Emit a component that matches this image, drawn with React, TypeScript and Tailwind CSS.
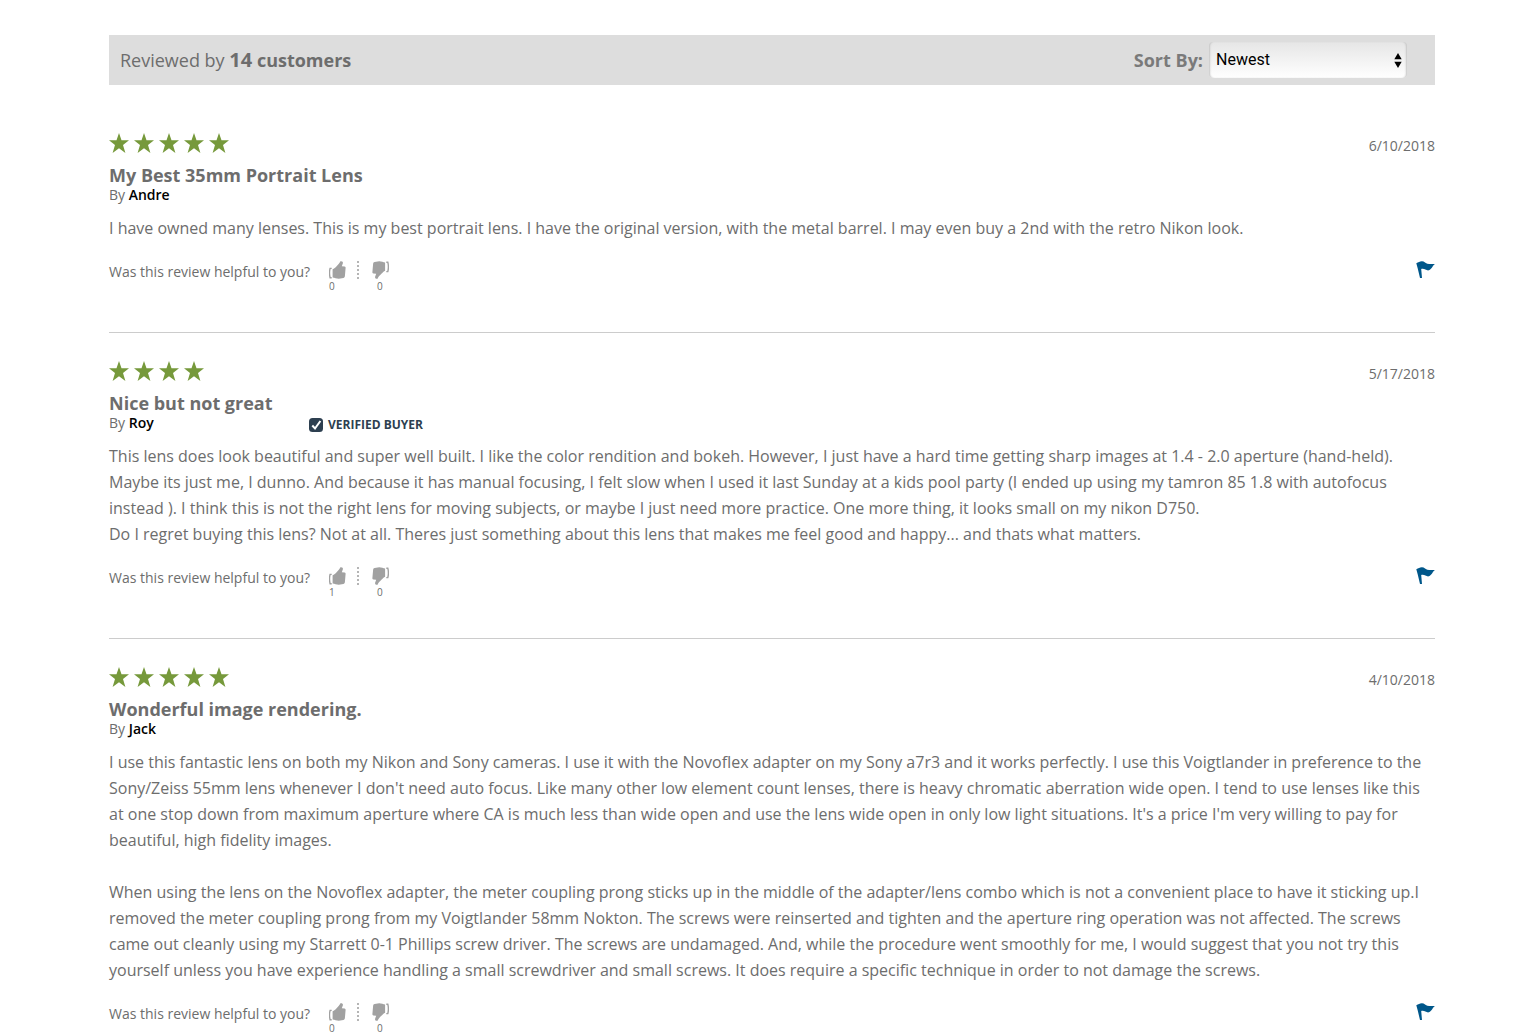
import React from 'react';

interface Review {
  id: string;
  rating: number;
  date: string;
  title: string;
  author: string;
  verified?: boolean;
  body: string;
  up: number;
  down: number;
}

const reviews: Review[] = [
  {
    id: 'andre',
    rating: 5,
    date: '6/10/2018',
    title: 'My Best 35mm Portrait Lens',
    author: 'Andre',
    body: 'I have owned many lenses. This is my best portrait lens. I have the original version, with the metal barrel. I may even buy a 2nd with the retro Nikon look.',
    up: 0,
    down: 0,
  },
  {
    id: 'roy',
    rating: 4,
    date: '5/17/2018',
    title: 'Nice but not great',
    author: 'Roy',
    verified: true,
    body: 'This lens does look beautiful and super well built. I like the color rendition and bokeh. However, I just have a hard time getting sharp images at 1.4 - 2.0 aperture (hand-held). Maybe its just me, I dunno. And because it has manual focusing, I felt slow when I used it last Sunday at a kids pool party (I ended up using my tamron 85 1.8 with autofocus instead ). I think this is not the right lens for moving subjects, or maybe I just need more practice. One more thing, it looks small on my nikon D750.\nDo I regret buying this lens? Not at all. Theres just something about this lens that makes me feel good and happy... and thats what matters.',
    up: 1,
    down: 0,
  },
  {
    id: 'jack',
    rating: 5,
    date: '4/10/2018',
    title: 'Wonderful image rendering.',
    author: 'Jack',
    body: "I use this fantastic lens on both my Nikon and Sony cameras. I use it with the Novoflex adapter on my Sony a7r3 and it works perfectly. I use this Voigtlander in preference to the Sony/Zeiss 55mm lens whenever I don't need auto focus. Like many other low element count lenses, there is heavy chromatic aberration wide open. I tend to use lenses like this at one stop down from maximum aperture where CA is much less than wide open and use the lens wide open in only low light situations. It's a price I'm very willing to pay for beautiful, high fidelity images.\n\nWhen using the lens on the Novoflex adapter, the meter coupling prong sticks up in the middle of the adapter/lens combo which is not a convenient place to have it sticking up.I removed the meter coupling prong from my Voigtlander 58mm Nokton. The screws were reinserted and tighten and the aperture ring operation was not affected. The screws came out cleanly using my Starrett 0-1 Phillips screw driver. The screws are undamaged. And, while the procedure went smoothly for me, I would suggest that you not try this yourself unless you have experience handling a small screwdriver and small screws. It does require a specific technique in order to not damage the screws.",
    up: 0,
    down: 0,
  },
];

function Star() {
  return (
    <svg className="h-5 w-5" viewBox="0 0 20 20" fill="#76993b" aria-hidden="true">
      <path d="M10 0 12.5 7.2H20L14 11.9 16.4 20 10 15.2 3.6 20 6 11.9 0 7.2H7.5Z" />
    </svg>
  );
}

function ThumbUp() {
  return (
    <svg className="h-[18px] w-[17px]" viewBox="0 0 17 18" fill="#a1a1a1" aria-hidden="true">
      <path d="M11.4 0.3C13.2 0 14.2 0.9 13.9 2.3L12.8 5.3 15.6 5.6C16.4 5.8 16.7 6.3 16.6 7L15.9 15C15.8 16.2 15.3 16.8 14.4 17L9.8 17.8C7.4 17.8 5.7 16.9 3.6 16.6V8.3C5.2 7.8 6.4 6.4 7.6 5.2 9.2 3.7 10.7 2.2 11.4 0.3Z" />
      <path d="M2.7 7.4H1.1Q-0.1 12 1.1 16.8H2.7" fill="none" stroke="#a1a1a1" strokeWidth="1.4" />
    </svg>
  );
}

function ThumbDown() {
  return (
    <svg className="h-[18px] w-[17px]" viewBox="0 0 17 18" fill="#a1a1a1" aria-hidden="true">
      <path d="M5.6 17.7C3.8 18 2.8 17.1 3.1 15.7L4.2 12.7 1.4 12.4C0.6 12.2 0.3 11.7 0.4 11L1.1 3C1.2 1.8 1.7 1.2 2.6 1L7.2 0.2C9.6 0.2 11.3 1.1 13.1 1.4V9.7C11.8 10.2 10.6 11.6 9.4 12.8 7.8 14.3 6.3 15.8 5.6 17.7Z" />
      <path d="M14.3 1.2H15.8Q17 6 15.8 10.6H14.3" fill="none" stroke="#a1a1a1" strokeWidth="1.4" />
    </svg>
  );
}

function Flag() {
  return (
    <svg className="h-[18px] w-[19px]" viewBox="0 0 19 18" fill="#00578a" aria-hidden="true">
      <path d="M0.3 2.2C2.5 1.6 3.7 0.2 6 0.3 8.4 0.4 9 2.3 11.3 2.7 13.7 3.1 16.2 2.8 18.9 3.1 16.4 4.8 15.8 8.4 12.9 9.3 10.3 10 8.2 7 5.2 8.1L6 17.1H4L1.8 7.8Z" />
    </svg>
  );
}

function VerifiedBadge() {
  return (
    <span className="flex items-center gap-1 text-xs font-bold text-[#2d3f50]">
      <svg className="h-[15px] w-[15px]" viewBox="0 0 15 15" aria-hidden="true">
        <rect x="0" y="0" width="14" height="14" rx="3.5" fill="#2d3f50" />
        <path d="M3.3 7.5 6 10.5 11.4 3" fill="none" stroke="#fff" strokeWidth="2" />
      </svg>
      VERIFIED BUYER
    </span>
  );
}

function ReviewItem({ review }: { review: Review }) {
  return (
    <article className="border-b border-[#ccc] pt-7 pb-[39px] last:border-b-0 last:pb-0">
      <div className="flex justify-between">
        <div className="flex h-8 gap-[5px]" role="img" aria-label={`${review.rating} out of 5 stars`}>
          {Array.from({ length: review.rating }, (_, i) => (
            <Star key={i} />
          ))}
        </div>
        <time className="pt-[3px] text-sm leading-5">{review.date}</time>
      </div>
      <h2 className="text-lg leading-5 font-bold">{review.title}</h2>
      <div className="flex h-5 text-sm leading-5">
        <p className="w-[200px] font-medium">
          By <span className="font-semibold text-black">{review.author}</span>
        </p>
        {review.verified && (
          <div className="pt-1">
            <VerifiedBadge />
          </div>
        )}
      </div>
      <p className="mt-2.5 text-base leading-[26px] whitespace-pre-line">{review.body}</p>
      <div className="mt-5 flex justify-between">
        <div className="flex h-8">
          <p className="w-[220px] text-sm leading-[22px]">Was this review helpful to you?</p>
          <button type="button" aria-label="Helpful" className="flex flex-col items-start text-[10px] leading-[14px]">
            <ThumbUp />
            {review.up}
          </button>
          <span className="mx-[11px] h-[18px] border-l-2 border-dotted border-[#b5b5b5]" />
          <button type="button" aria-label="Not helpful" className="ml-0.5 flex flex-col items-start text-[10px] leading-[14px]">
            <ThumbDown />
            <span className="pl-[5px]">{review.down}</span>
          </button>
        </div>
        <button type="button" aria-label="Report this review" className="self-start">
          <Flag />
        </button>
      </div>
    </article>
  );
}

export default function App() {
  return (
    <main className="mr-[94px] ml-[109px] bg-white pt-[35px] font-['Open_Sans',sans-serif] text-[#6d6d6d]">
      <header className="flex h-[50px] items-center justify-between bg-[#ddd] pr-7 pl-[11px] text-lg">
        <p>
          Reviewed by <strong className="text-xl">14</strong> <strong>customers</strong>
        </p>
        <div className="flex items-center gap-1.5">
          <label htmlFor="sort" className="font-bold text-[#7a7a7a]">
            Sort By:
          </label>
          <div className="relative">
            <select
              id="sort"
              defaultValue="newest"
              className="h-9 w-[198px] appearance-none rounded-sm bg-linear-to-b from-[#e6e6e6] to-white pl-[7px] font-[Roboto,sans-serif] text-base text-black shadow-[inset_2px_0_2px_-1px_#c4c4c4,inset_-2px_0_2px_-1px_#c4c4c4]"
            >
              <option value="newest">Newest</option>
            </select>
            <svg className="pointer-events-none absolute top-[11px] right-[5px] h-[15px] w-2" viewBox="0 0 8 15" aria-hidden="true">
              <path d="M4 0 7.7 6.2H0.3ZM4 15 0.3 8.8H7.7Z" />
            </svg>
          </div>
        </div>
      </header>
      <section className="pt-5">
        {reviews.map((review) => (
          <ReviewItem key={review.id} review={review} />
        ))}
      </section>
    </main>
  );
}
